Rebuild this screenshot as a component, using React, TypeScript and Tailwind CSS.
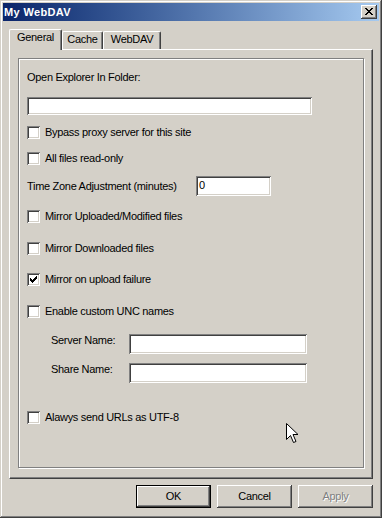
import React from "react";

const raised =
  "shadow-[inset_-1px_-1px_#404040,inset_1px_1px_#ffffff,inset_-2px_-2px_#808080,inset_2px_2px_#d4d0c8]";
const sunken =
  "shadow-[inset_1px_1px_#808080,inset_-1px_-1px_#ffffff,inset_2px_2px_#404040,inset_-2px_-2px_#d4d0c8]";

function CheckRow({
  label,
  checked = false,
  className = "",
}: {
  label: string;
  checked?: boolean;
  className?: string;
}) {
  return (
    <div className={`flex h-[13px] items-center gap-[5px] ${className}`}>
      <div className={`relative h-[13px] w-[13px] shrink-0 bg-white ${sunken}`}>
        {checked && (
          <svg
            className="absolute left-[3px] top-[3px]"
            width="7"
            height="7"
            viewBox="0 0 7 7"
            shapeRendering="crispEdges"
          >
            <path
              d="M6 0h1v1h-1z M5 1h2v1h-2z M0 2h1v1h-1z M4 2h3v1h-3z M0 3h2v1h-2z M3 3h3v1h-3z M0 4h5v1h-5z M1 5h3v1h-3z M2 6h1v1h-1z"
              fill="#000"
            />
          </svg>
        )}
      </div>
      <span className="whitespace-nowrap">{label}</span>
    </div>
  );
}

function Field({ value = "", className = "" }: { value?: string; className?: string }) {
  return (
    <div className={`bg-white pl-[3px] pt-[3px] ${sunken} ${className}`}>
      <span>{value}</span>
    </div>
  );
}

export default function App() {
  return (
    <div className="relative flex h-[518px] w-[382px] flex-col bg-[#d4d0c8] p-[3px] font-['Liberation_Sans',Arial,sans-serif] text-[11px] leading-[13px] tracking-[-0.3px] text-black shadow-[inset_-1px_-1px_#404040,inset_1px_1px_#d4d0c8,inset_-2px_-2px_#808080,inset_2px_2px_#ffffff]">
      {/* title bar */}
      <div className="flex h-[18px] items-center justify-between bg-linear-to-r from-[#0a246a] to-[#a6caf0] pl-[1px] pr-[2px]">
        <span className="font-bold tracking-[0.35px] text-white">My WebDAV</span>
        <div className={`relative h-[14px] w-[16px] bg-[#d4d0c8] ${raised}`}>
          <svg
            className="absolute left-[4px] top-[3px]"
            width="8"
            height="7"
            viewBox="0 0 8 7"
            shapeRendering="crispEdges"
          >
            <path
              d="M0 0h2v1h-2z M6 0h2v1h-2z M1 1h2v1h-2z M5 1h2v1h-2z M2 2h4v1h-4z M3 3h2v1h-2z M2 4h4v1h-4z M1 5h2v1h-2z M5 5h2v1h-2z M0 6h2v1h-2z M6 6h2v1h-2z"
              fill="#000"
            />
          </svg>
        </div>
      </div>

      {/* tabs */}
      <div className="ml-[6px] mt-[8px] flex items-end">
        <div className="relative z-10 -mb-px h-[21px] w-[53px] rounded-t-[2px] border-l border-r border-t border-l-white border-r-[#404040] border-t-white bg-[#d4d0c8] pt-[1px] text-center shadow-[inset_-1px_0_#808080]">
          General
        </div>
        <div className="h-[18px] w-[41px] rounded-t-[2px] border-l border-r border-t border-l-white border-r-[#404040] border-t-white pt-[1px] text-center shadow-[inset_-1px_0_#808080]">
          Cache
        </div>
        <div className="h-[18px] w-[58px] rounded-t-[2px] border-l border-r border-t border-l-white border-r-[#404040] border-t-white pt-[1px] text-center shadow-[inset_-1px_0_#808080]">
          WebDAV
        </div>
      </div>

      {/* tab panel */}
      <div className="ml-[6px] h-[430px] w-[364px] border border-b-[#404040] border-l-white border-r-[#404040] border-t-white p-[8px] shadow-[inset_-1px_-1px_#808080]">
        <div className="flex h-[410px] w-[346px] flex-col border border-[#808080] pl-[8px] shadow-[inset_1px_1px_#ffffff,1px_1px_#ffffff]">
          <div className="mt-[12px] h-[13px]">Open Explorer In Folder:</div>
          <Field className="mt-[13px] h-[18px] w-[285px]" />
          <CheckRow className="mt-[11px]" label="Bypass proxy server for this site" />
          <CheckRow className="mt-[13px]" label="All files read-only" />
          <div className="mt-[11px] flex h-[20px] items-center">
            <span className="w-[169px] whitespace-nowrap">Time Zone Adjustment (minutes)</span>
            <Field className="h-[20px] w-[75px]" value="0" />
          </div>
          <CheckRow className="mt-[14px]" label="Mirror Uploaded/Modified files" />
          <CheckRow className="mt-[19px]" label="Mirror Downloaded files" />
          <CheckRow className="mt-[18px]" label="Mirror on upload failure" checked />
          <CheckRow className="mt-[19px]" label="Enable custom UNC names" />
          <div className="ml-[24px] mt-[16px] flex items-start">
            <span className="w-[78px] whitespace-nowrap">Server Name:</span>
            <Field className="h-[20px] w-[178px]" />
          </div>
          <div className="ml-[24px] mt-[9px] flex items-start">
            <span className="w-[78px] whitespace-nowrap">Share Name:</span>
            <Field className="h-[20px] w-[178px]" />
          </div>
          <CheckRow className="mt-[28px]" label="Alawys send URLs as UTF-8" />
        </div>
      </div>

      {/* buttons */}
      <div className="ml-[6px] mt-[6px] flex w-[364px] justify-end gap-[6px]">
        <button className={`flex h-[23px] w-[75px] items-center justify-center border border-black bg-[#d4d0c8] ${raised}`}>
          OK
        </button>
        <button className={`flex h-[23px] w-[75px] items-center justify-center bg-[#d4d0c8] ${raised}`}>
          Cancel
        </button>
        <button
          className={`flex h-[23px] w-[75px] items-center justify-center bg-[#d4d0c8] text-[#808080] [text-shadow:1px_1px_0_#ffffff] ${raised}`}
        >
          Apply
        </button>
      </div>

      {/* mouse pointer */}
      <svg
        className="pointer-events-none absolute left-[286px] top-[423px]"
        width="13"
        height="21"
        viewBox="0 0 13 21"
      >
        <path
          d="M0.5 0.5 L0.5 16.5 L4.5 12.5 L7.5 19.5 L10 18.5 L7 11.5 L12 11.5 Z"
          fill="#fff"
          stroke="#000"
          strokeWidth="1"
          strokeLinejoin="miter"
        />
      </svg>
    </div>
  );
}
